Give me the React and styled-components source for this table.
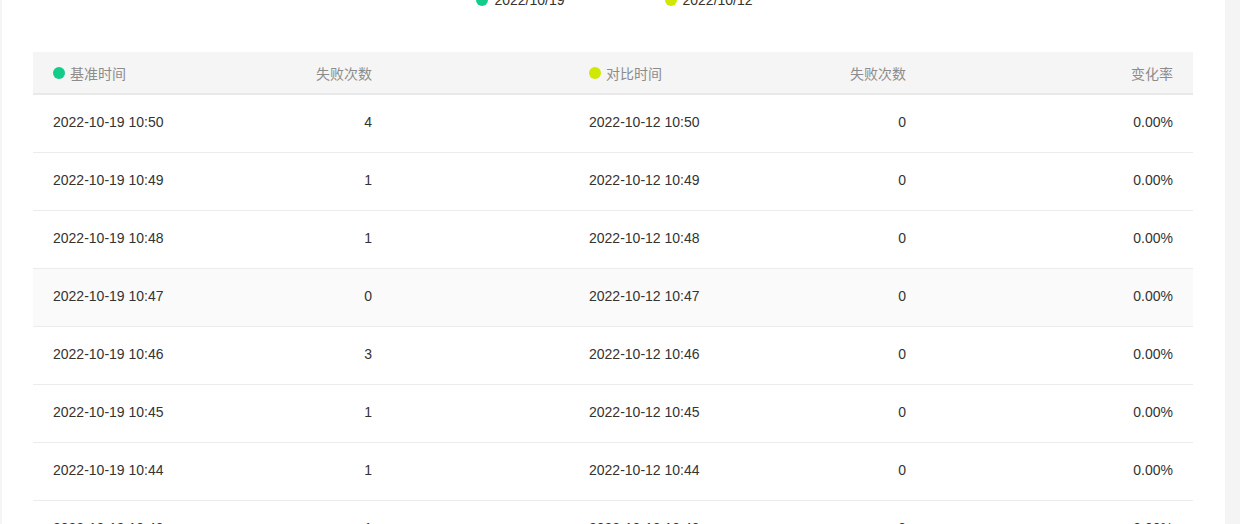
import React from "react";
import styled, { createGlobalStyle } from "styled-components";

const GlobalStyle = createGlobalStyle`
  html, body {
    margin: 0;
    padding: 0;
    background: #f4f4f4;
    overflow: hidden;
  }
  body {
    font-family: "Liberation Sans", Arial, "Noto Sans CJK SC", sans-serif;
  }
`;

const BASE = "#12cc8a";
const COMPARE = "#cfe805";

const Page = styled.div`
  display: flex;
  height: 524px;
  padding-left: 2px;
`;

const Card = styled.div`
  width: 1223px;
  background: #fff;
  padding: 0 32px 0 31px;
  box-sizing: border-box;
  margin-top: -10px;
`;

const Legend = styled.div`
  display: flex;
  justify-content: center;
  gap: 100px;
  height: 20px;
  padding-left: 3px;
  margin-bottom: 42px;
`;

const LegendItem = styled.div`
  display: flex;
  align-items: center;
  gap: 6px;
  font-size: 14px;
  line-height: 20px;
  color: #333;
`;

const Dot = styled.span`
  width: 12px;
  height: 12px;
  border-radius: 50%;
  background: ${({ $color }) => $color};
  flex-shrink: 0;
`;

const Grid = styled.div`
  display: grid;
  grid-template-columns: 180px 179px 357px 177px 1fr;
  align-items: center;
  font-size: 14px;
`;

const Head = styled(Grid)`
  height: 41px;
  padding-top: 1px;
  box-sizing: border-box;
  height: 43px;
  background: #f5f5f5;
  border-bottom: 2px solid #e9e9e9;
  color: #8c8c8c;
`;

const Row = styled(Grid)`
  height: 54px;
  padding-bottom: 3px;
  border-bottom: 1px solid #ececec;
  color: #333;
  background: ${({ $hover }) => ($hover ? "#fafafa" : "#fff")};
`;

const Cell = styled.div`
  padding: 0 20px;
  padding-left: ${({ $indent }) => ($indent ? "197px" : "20px")};
  white-space: nowrap;
  display: flex;
  align-items: center;
  justify-content: ${({ $right }) => ($right ? "flex-end" : "flex-start")};
  gap: 5px;
`;

const rows = [
  ["10:50", 4],
  ["10:49", 1],
  ["10:48", 1],
  ["10:47", 0],
  ["10:46", 3],
  ["10:45", 1],
  ["10:44", 1],
  ["10:43", 1],
];

export default function App() {
  return (
    <>
      <GlobalStyle />
      <Page>
        <Card>
          <Legend>
            <LegendItem>
              <Dot $color={BASE} />
              2022/10/19
            </LegendItem>
            <LegendItem>
              <Dot $color={COMPARE} />
              2022/10/12
            </LegendItem>
          </Legend>
          <Head>
            <Cell>
              <Dot $color={BASE} />
              基准时间
            </Cell>
            <Cell $right>失败次数</Cell>
            <Cell $indent>
              <Dot $color={COMPARE} />
              对比时间
            </Cell>
            <Cell $right>失败次数</Cell>
            <Cell $right>变化率</Cell>
          </Head>
          {rows.map(([t, n]) => (
            <Row key={t} $hover={t === "10:47"}>
              <Cell>2022-10-19 {t}</Cell>
              <Cell $right>{n}</Cell>
              <Cell $indent>2022-10-12 {t}</Cell>
              <Cell $right>0</Cell>
              <Cell $right>0.00%</Cell>
            </Row>
          ))}
        </Card>
      </Page>
    </>
  );
}
